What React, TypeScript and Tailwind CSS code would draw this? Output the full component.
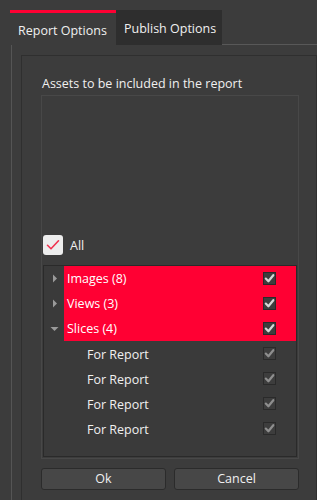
import React from "react";

const Check = ({ color }: { color: string }) => (
  <svg width="11" height="11" viewBox="0 0 11 11">
    <path d="M1.8 5.6 L4.4 8.3 L9.3 2.2" fill="none" stroke={color} strokeWidth="2.2" strokeLinecap="round" strokeLinejoin="round" />
  </svg>
);

const RowBox = ({ color }: { color: string }) => (
  <div className="w-[13px] h-[13px] border border-[#2a2a2a] bg-[#3d3d3d] flex items-center justify-center">
    <Check color={color} />
  </div>
);

const RightArrow = () => (
  <svg width="8" height="9" viewBox="0 0 8 9">
    <path d="M2 0.5 L6 4.5 L2 8.5 Z" fill="#9a9a9a" />
  </svg>
);
const DownArrow = () => (
  <svg width="9" height="8" viewBox="0 0 9 8">
    <path d="M0.5 2 L8.5 2 L4.5 6 Z" fill="#9a9a9a" />
  </svg>
);

export default function App() {
  const parents = [
    { label: "Images (8)", open: false },
    { label: "Views (3)", open: false },
    { label: "Slices (4)", open: true },
  ];
  return (
    <div
      className="w-[317px] h-[500px] bg-[#3c3c3c] overflow-hidden text-[12.5px] text-[#f0f0f0] flex flex-col"
      style={{ fontFamily: '"Open Sans", "Noto Sans", sans-serif' }}
    >
      <div className="flex pt-[10px] pl-[10px] h-[45px]">
        <div className="w-[106px] h-[35px] border-t-[3px] border-[#ff0033] flex items-center pl-[8px] pt-[5px]">
          Report Options
        </div>
        <div className="w-[106px] h-[35px] bg-[#2e2e2e] flex items-center pl-[8px] pt-[4px]">
          Publish Options
        </div>
        <div className="flex-1 h-[35px] border-b border-[#585858]" />
      </div>
      <div className="flex-1 ml-[11px] border-l border-[#555555] pl-[9px] pt-[10px]">
        <div className="w-[296px] h-[460px] border border-[#2f2f2f] pl-[19px] pt-[17px]">
          <div className="h-[22px] leading-[22px] pl-[1px]">Assets to be included in the report</div>
          <div className="w-[258px] h-[364px] border border-[#484848] flex flex-col justify-end px-[1px] pb-[1px]">
            <div className="flex items-center h-[20px] mb-[10px]">
              <div className="w-[20px] h-[20px] rounded-[3px] bg-[#ededed] flex items-center justify-center">
                <svg width="16" height="16" viewBox="0 0 16 16">
                  <path d="M2.5 8.3 L6 11.8 L13.5 3.8" fill="none" stroke="#f0324f" strokeWidth="1.6" strokeLinecap="round" strokeLinejoin="round" />
                </svg>
              </div>
              <span className="ml-[7px] pt-[2px]">All</span>
            </div>
            <div className="h-[192px] border border-[#2a2a2a] bg-[#3a3a3a] flex flex-col">
              {parents.map((p) => (
                <div key={p.label} className="flex h-[25px] items-center">
                  <div className="w-[20px] flex items-center justify-center pl-[1px]">
                    {p.open ? <DownArrow /> : <RightArrow />}
                  </div>
                  <div className="flex-1 h-[25px] bg-[#ff0033] flex items-center pl-[3px] pr-[20px] justify-between text-white">
                    <span className="pt-[2px]">{p.label}</span>
                    <RowBox color="#d6d6d6" />
                  </div>
                </div>
              ))}
              {[0, 1, 2, 3].map((i) => (
                <div key={i} className="flex h-[25px] items-center pl-[43px] pr-[20px] justify-between">
                  <span className="pt-[3px]">For Report</span>
                  <RowBox color="#8e8e8e" />
                </div>
              ))}
            </div>
          </div>
          <div className="flex gap-[8px] mt-[9px]">
            <button className="w-[125px] h-[22px] rounded-[3px] bg-[#474747] border border-[#2b2b2b] text-[#f0f0f0]">Ok</button>
            <button className="w-[125px] h-[22px] rounded-[3px] bg-[#474747] border border-[#2b2b2b] text-[#f0f0f0]">Cancel</button>
          </div>
        </div>
      </div>
    </div>
  );
}
